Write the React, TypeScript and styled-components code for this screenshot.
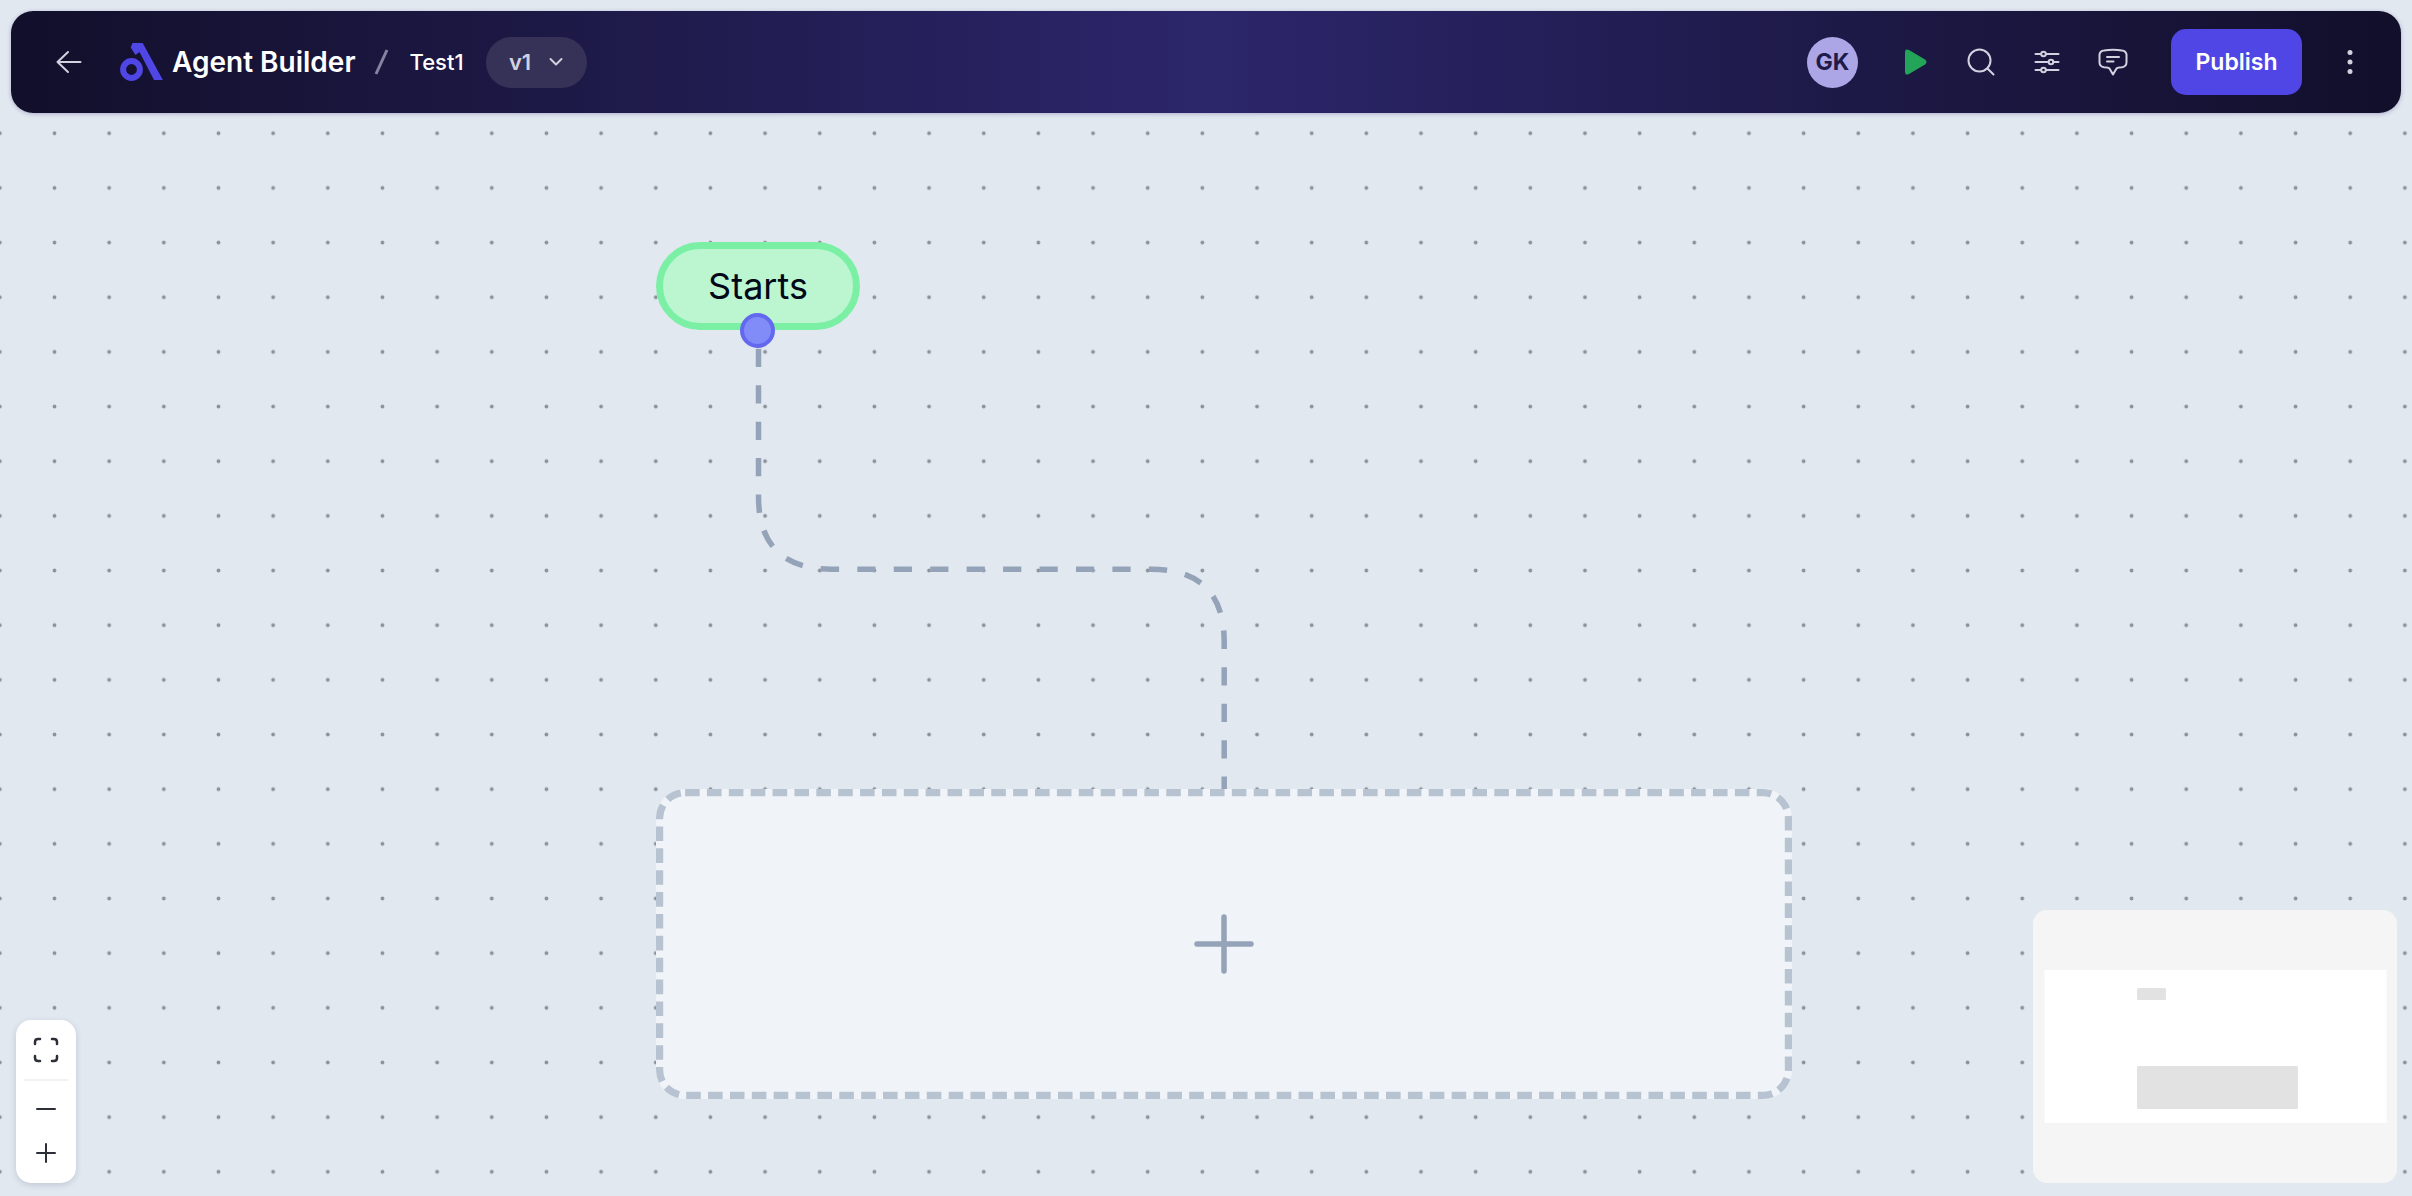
import React from "react";
import styled, { createGlobalStyle } from "styled-components";

const GlobalStyle = createGlobalStyle`
  * { box-sizing: border-box; }
  body {
    margin: 0;
    background: #e1e8f0;
    font-family: Inter, "Liberation Sans", sans-serif;
  }
  button {
    font: inherit;
    color: inherit;
    border: 0;
    padding: 0;
    background: none;
    cursor: pointer;
  }
  svg { display: block; }
`;

const Page = styled.div`
  position: relative;
  display: flex;
  flex-direction: column;
  justify-content: space-between;
  min-height: 100vh;
  overflow: hidden;
`;

const Header = styled.header`
  position: relative;
  display: flex;
  align-items: center;
  justify-content: space-between;
  height: 102px;
  margin: 11px;
  padding: 0 29px 0 36px;
  border-radius: 22px;
  background: linear-gradient(90deg, #120f2b 0%, #1e1a49 25%, #2c266b 50%, #1e1a49 75%, #120f2b 100%);
  box-shadow: 0 1px 4px rgba(60, 40, 120, 0.3);
  color: #fff;
`;

const Group = styled.div<{ $gap: number }>`
  display: flex;
  align-items: center;
  gap: ${(p) => p.$gap}px;
`;

const IconButton = styled.button`
  display: flex;
  align-items: center;
  justify-content: center;
  width: 44px;
  height: 44px;
  color: #d3d1df;
`;

const Brand = styled.h1`
  display: flex;
  align-items: center;
  gap: 9px;
  margin: 0 0 0 29px;
  font-size: 28px;
  line-height: 36px;
  font-weight: 600;
`;

const Slash = styled.span`
  display: flex;
  margin: 0 21px 0 18px;
  color: #8583a0;
`;

const ProjectName = styled.span`
  margin-right: 22px;
  font-size: 22px;
  line-height: 32px;
  font-weight: 500;
`;

const VersionButton = styled.button`
  display: flex;
  align-items: center;
  justify-content: center;
  gap: 18px;
  width: 101px;
  height: 51px;
  border-radius: 26px;
  background: #353157;
  color: #d3d1df;
  font-size: 22px;
  font-weight: 600;
`;

const Avatar = styled.span`
  display: flex;
  align-items: center;
  justify-content: center;
  width: 51px;
  height: 51px;
  margin-right: 13px;
  border-radius: 50%;
  background: #aca5e6;
  color: #1e1a49;
  font-size: 23px;
  font-weight: 700;
`;

const PublishButton = styled.button`
  width: 131px;
  height: 66px;
  margin: 0 4px 0 14px;
  border-radius: 15px;
  background: #4f46e5;
  color: #fff;
  font-size: 23px;
  font-weight: 600;
`;

const Canvas = styled.main`
  position: absolute;
  inset: 0;
`;

const Layer = styled.svg`
  position: absolute;
  inset: 0;
  width: 100%;
  height: 100%;
`;

const StartNode = styled.div`
  position: absolute;
  left: 656px;
  top: 242px;
  display: flex;
  align-items: center;
  justify-content: center;
  width: 204px;
  height: 88px;
  border: 7px solid #7bf0a5;
  border-radius: 44px;
  background: #bbf6d1;
  color: #020817;
  font-size: 36px;
`;

const Handle = styled.span`
  position: absolute;
  left: 740px;
  top: 313px;
  width: 35px;
  height: 35px;
  border: 4px solid #6468ee;
  border-radius: 50%;
  background: #818cf8;
`;

const PlaceholderNode = styled.button`
  position: absolute;
  left: 656px;
  top: 789px;
  display: flex;
  align-items: center;
  justify-content: center;
  width: 1136px;
  height: 310px;
  border-radius: 29px;
  background: #f0f4f9;
  color: #94a3b8;
`;

const Footer = styled.footer`
  position: relative;
  display: flex;
  align-items: flex-end;
  justify-content: space-between;
  padding: 0 15px 13px 16px;
`;

const ZoomPanel = styled.div`
  display: flex;
  flex-direction: column;
  align-items: center;
  width: 60px;
  padding: 8px 0;
  border-radius: 15px;
  background: #fff;
  box-shadow: 0 2px 6px rgba(30, 40, 70, 0.16);
`;

const Divider = styled.span`
  width: 44px;
  height: 2px;
  margin: 7px 0 6px;
  background: #f0f2f4;
`;

const MiniMap = styled.div`
  width: 364px;
  height: 273px;
  border-radius: 14px;
  background: #f5f5f5;
  overflow: hidden;
`;

const strokeProps = {
  fill: "none",
  stroke: "currentColor",
  strokeWidth: 2,
  strokeLinecap: "round" as const,
  strokeLinejoin: "round" as const,
};

export default function App() {
  return (
    <Page>
      <GlobalStyle />
      <Canvas>
        <Layer aria-hidden="true">
          <defs>
            <pattern id="dots" x="-27.5" y="-3.4" width="54.66" height="54.66" patternUnits="userSpaceOnUse">
              <circle cx="27.33" cy="27.33" r="1.9" fill="#8d9199" />
            </pattern>
          </defs>
          <rect y="113" width="100%" height="100%" fill="url(#dots)" />
        </Layer>
        <Layer aria-hidden="true">
          <path
            d="M758.5 348.800V496.200Q758.500 569.200 831.500 569.200H1151.200Q1224.200 569.200 1224.200 642.200V790"
            fill="none"
            stroke="#94a3b8"
            strokeWidth="5.5"
            strokeDasharray="18.22"
          />
        </Layer>
        <StartNode>Starts</StartNode>
        <Handle />
        <PlaceholderNode aria-label="Add step">
          <Layer aria-hidden="true">
            <rect
              x="3.6"
              y="3.6"
              width="1128.8"
              height="302.8"
              rx="25.5"
              fill="none"
              stroke="#b7c3d1"
              strokeWidth="7.2"
              strokeDasharray="14.58 7.29"
            />
          </Layer>
          <svg width="64" height="64" viewBox="0 0 64 64" {...strokeProps} strokeWidth={5.5}>
            <path d="M32 5V59M5 32H59" />
          </svg>
        </PlaceholderNode>
      </Canvas>

      <Header>
        <Group $gap={0}>
          <IconButton aria-label="Back">
            <svg width="26" height="26" viewBox="0 0 26 26" {...strokeProps}>
              <path d="M24.500 13H1.500M12 3L1.500 13L12 23" />
            </svg>
          </IconButton>
          <Brand>
            <svg width="43" height="40" viewBox="0 0 43 40" aria-hidden="true">
              <circle cx="11.500" cy="27.500" r="8.400" fill="none" stroke="#4f46e5" strokeWidth="6" />
              <path d="M12.500 1H22.700L42.900 38H34L19.500 10L15.500 13L10.700 5.500Z" fill="#4f46e5" />
            </svg>
            Agent Builder
          </Brand>
          <Slash>
            <svg width="15" height="26" viewBox="0 0 15 26" {...strokeProps} strokeWidth={3} strokeLinecap="butt">
              <path d="M13 1L2 25" />
            </svg>
          </Slash>
          <ProjectName>Test1</ProjectName>
          <VersionButton>
            v1
            <svg width="14" height="10" viewBox="0 0 14 10" {...strokeProps}>
              <path d="M1.500 2L7 7.500L12.500 2" />
            </svg>
          </VersionButton>
        </Group>
        <Group $gap={22}>
          <Avatar>GK</Avatar>
          <IconButton aria-label="Run">
            <svg width="24" height="28" viewBox="0 0 24 28">
              <path d="M2 4.500V23.500Q2 28 6 26L22 16.500Q25 14 22 11.500L6 2Q2 0 2 4.500Z" fill="#23a559" />
            </svg>
          </IconButton>
          <IconButton aria-label="Search">
            <svg width="28" height="28" viewBox="0 0 28 28" {...strokeProps}>
              <circle cx="12.500" cy="12.500" r="11" />
              <path d="M20.500 20.500L26.500 26.500" />
            </svg>
          </IconButton>
          <IconButton aria-label="Settings">
            <svg width="26" height="26" viewBox="0 0 26 26" {...strokeProps}>
              <path d="M1.500 5H7M12 5H24.500M1.500 13H14M19 13H24.500M1.500 21H7M12 21H24.500" />
              <circle cx="9.500" cy="5" r="2.300" />
              <circle cx="17" cy="13" r="2.300" />
              <circle cx="9.500" cy="21" r="2.300" />
            </svg>
          </IconButton>
          <IconButton aria-label="Comments">
            <svg width="30" height="28" viewBox="0 0 30 28" {...strokeProps}>
              <path d="M6 2.500Q15 0.800 24 2.500Q28 3 28.500 6.500V14.500Q28.300 18.500 24 19.300Q19.500 19.500 18.500 20.500L15 26.500L11.500 20.500Q10.500 19.500 6 19.300Q1.700 18.500 1.500 14.500V6.500Q2 3 6 2.500Z" />
              <path d="M9 9H21M9 13.500H15.500" />
            </svg>
          </IconButton>
          <PublishButton>Publish</PublishButton>
          <IconButton aria-label="More">
            <svg width="6" height="26" viewBox="0 0 6 26" fill="currentColor">
              <circle cx="3" cy="3.500" r="2.500" />
              <circle cx="3" cy="13" r="2.500" />
              <circle cx="3" cy="22.500" r="2.500" />
            </svg>
          </IconButton>
        </Group>
      </Header>

      <Footer>
        <ZoomPanel>
          <IconButton aria-label="Fit view">
            <svg width="26" height="26" viewBox="0 0 26 26" {...strokeProps} stroke="#2c2f38" strokeWidth={2.5}>
              <path d="M2 7V5Q2 2 5 2H7M19 2H21Q24 2 24 5V7M24 19V21Q24 24 21 24H19M7 24H5Q2 24 2 21V19" />
            </svg>
          </IconButton>
          <Divider />
          <IconButton aria-label="Zoom out">
            <svg width="20" height="20" viewBox="0 0 20 20" {...strokeProps} stroke="#2c2f38">
              <path d="M1 10H19" />
            </svg>
          </IconButton>
          <IconButton aria-label="Zoom in">
            <svg width="20" height="20" viewBox="0 0 20 20" {...strokeProps} stroke="#2c2f38">
              <path d="M1 10H19M10 1V19" />
            </svg>
          </IconButton>
        </ZoomPanel>
        <MiniMap>
          <svg width="364" height="273" viewBox="0 0 364 273" role="img" aria-label="Mini map">
            <rect x="11.500" y="60" width="342" height="153" fill="#fff" />
            <rect x="104" y="78" width="29" height="12" rx="1.500" fill="#e2e2e2" />
            <rect x="104" y="156" width="161" height="43" rx="1.500" fill="#e2e2e2" />
          </svg>
        </MiniMap>
      </Footer>
    </Page>
  );
}
